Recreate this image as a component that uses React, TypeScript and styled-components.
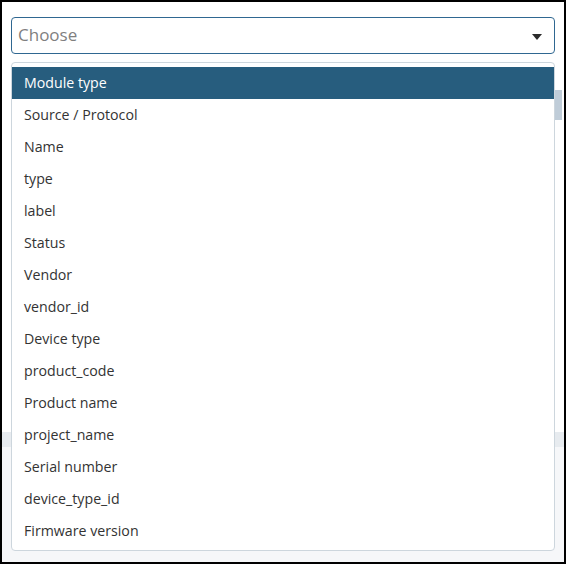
import React from "react";
import styled, { createGlobalStyle } from "styled-components";

const Global = createGlobalStyle`
  html, body { margin: 0; padding: 0; }
  body { font-family: "Open Sans", "Liberation Sans", sans-serif; }
  * { box-sizing: border-box; }
`;

const Frame = styled.div`
  position: relative;
  width: 566px;
  height: 564px;
  border: 2px solid #000;
  background: linear-gradient(
    to bottom,
    #ffffff 0px,
    #ffffff 430px,
    #e7ebef 430px,
    #e7ebef 445px,
    #f6f7f9 445px,
    #f6f7f9 100%
  );
  padding: 15px 9px 0 9px;
`;

const SelectWrap = styled.div`
  position: relative;
  width: 544px;
`;

const Control = styled.div`
  display: flex;
  align-items: center;
  justify-content: space-between;
  height: 37px;
  padding: 0 12px 0 6px;
  border: 1px solid #2f6791;
  border-radius: 4px;
  background: #fff;
`;

const Placeholder = styled.span`
  font-size: 17px;
  color: #7f7f7f;
  margin-top: -3px;
`;

const Caret = styled.span`
  width: 0;
  height: 0;
  border-left: 5px solid transparent;
  border-right: 5px solid transparent;
  border-top: 6px solid #2b2b2b;
  margin-top: 2px;
`;

const Menu = styled.ul`
  position: absolute;
  top: 45px;
  left: 0;
  right: 0;
  margin: 0;
  padding: 4px 0 3px;
  list-style: none;
  background: #fff;
  border: 1px solid #cdd6dd;
  border-radius: 4px;
  z-index: 2;
`;

const Item = styled.li<{ $active?: boolean }>`
  height: 32px;
  display: flex;
  align-items: center;
  padding: 0 0 2px 12px;
  font-size: 14.2px;
  color: ${(p) => (p.$active ? "#ffffff" : "#333333")};
  background: ${(p) => (p.$active ? "#275d7e" : "transparent")};
`;

const Thumb = styled.div`
  position: absolute;
  left: 553px;
  top: 88px;
  width: 7px;
  height: 30px;
  background: #bfccd8;
`;

const options = [
  "Module type",
  "Source / Protocol",
  "Name",
  "type",
  "label",
  "Status",
  "Vendor",
  "vendor_id",
  "Device type",
  "product_code",
  "Product name",
  "project_name",
  "Serial number",
  "device_type_id",
  "Firmware version",
];

export default function App() {
  return (
    <Frame>
      <Global />
      <Thumb />
      <SelectWrap>
        <Control>
          <Placeholder>Choose</Placeholder>
          <Caret />
        </Control>
        <Menu>
          {options.map((o, i) => (
            <Item key={o} $active={i === 0}>
              {o}
            </Item>
          ))}
        </Menu>
      </SelectWrap>
    </Frame>
  );
}
